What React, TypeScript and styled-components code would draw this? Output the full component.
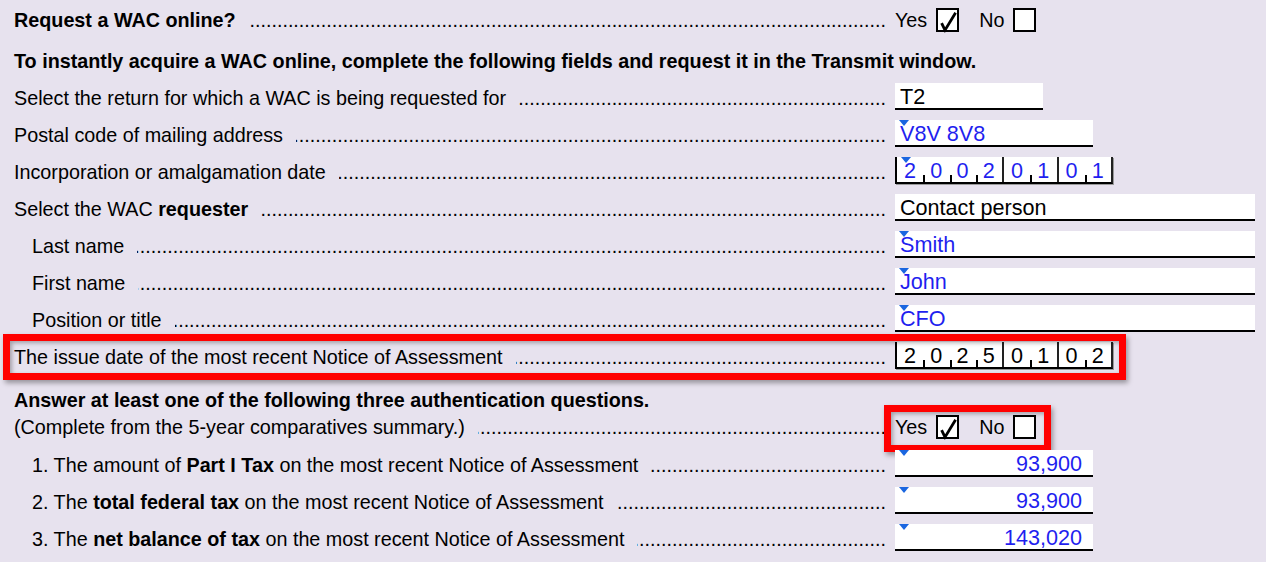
import React from "react";
import styled, { createGlobalStyle, css } from "styled-components";

const BLUE = "#1f1fef";
const MARK = "#1a66e0";

const GlobalStyle = createGlobalStyle`
  *, *::before, *::after { box-sizing: border-box; }
  html, body { margin: 0; padding: 0; }
  body {
    background: #e7e2ee;
    color: #000;
    font-family: "Liberation Sans", Arial, sans-serif;
    font-size: 19.75px;
  }
`;

// red review frame drawn over the highlighted part
const redFrame = (inset: string) => css`
  position: relative;
  &::after {
    content: "";
    position: absolute;
    inset: ${inset};
    border: 7px solid #ff0000;
    box-shadow: 2px 3px 5px rgba(0, 0, 0, 0.35), inset 2px 2px 4px rgba(0, 0, 0, 0.3);
    pointer-events: none;
  }
`;

const Page = styled.div`
  width: 1266px;
  height: 562px;
  overflow: hidden;
  padding: 5px 0 0 14px;
  display: flex;
  flex-direction: column;
`;

const Heading = styled.div<{ $lh?: number; $after?: number }>`
  font-weight: 700;
  white-space: nowrap;
  line-height: ${(p) => p.$lh ?? 27}px;
  margin-bottom: ${(p) => p.$after ?? 0}px;
`;

const Row = styled.div<{ $after?: number; $highlight?: boolean }>`
  display: grid;
  grid-template-columns: 872px max-content;
  grid-template-rows: 27px;
  column-gap: 9px;
  align-items: start;
  width: max-content;
  margin-bottom: ${(p) => p.$after ?? 10}px;
  ${(p) => p.$highlight && redFrame("-8px -13px -11px -11px")}
`;

const Label = styled.div<{ $indent?: boolean; $bold?: boolean }>`
  display: flex;
  align-items: baseline;
  min-width: 0;
  padding-top: 2px;
  padding-left: ${(p) => (p.$indent ? 18 : 0)}px;
  line-height: 27px;
  white-space: nowrap;
  font-weight: ${(p) => (p.$bold ? 700 : 400)};
`;

const Leader = styled.span`
  flex: 1 1 0;
  min-width: 0;
  margin-left: 13px;
  overflow: hidden;
  direction: rtl;
  font-weight: 400;
  &::after {
    content: "........................................................................................................................................................................................";
  }
`;

const Field = styled.div<{ $w: number; $blue?: boolean; $right?: boolean }>`
  position: relative;
  width: ${(p) => p.$w}px;
  height: 27px;
  padding: 2px ${(p) => (p.$right ? 11 : 5)}px 0 5px;
  background: #fff;
  border-bottom: 2px solid #000;
  font-size: 21.6px;
  line-height: 23px;
  white-space: nowrap;
  color: ${(p) => (p.$blue ? BLUE : "#000")};
  text-align: ${(p) => (p.$right ? "right" : "left")};
`;

const Marker = styled.span`
  position: absolute;
  top: 0;
  left: 4px;
  width: 0;
  height: 0;
  border-left: 5px solid transparent;
  border-right: 5px solid transparent;
  border-top: 6px solid ${MARK};
  z-index: 1;
`;

const DateBox = styled.div<{ $blue?: boolean }>`
  position: relative;
  display: flex;
  width: 218px;
  height: 27px;
  border-left: 2px solid #000;
  border-bottom: 2px solid #000;
  border-right: 2px solid #222;
  box-shadow: 1px 1px 0 #9a9a9a;
  font-size: 21.6px;
  color: ${(p) => (p.$blue ? BLUE : "#000")};
`;

const Cell = styled.span<{ $divider: "none" | "tick" | "full" }>`
  flex: 1 1 0;
  padding-top: 2px;
  line-height: 23px;
  text-align: center;
  background: #fff;
  ${(p) =>
    p.$divider === "tick" &&
    css`
      background: linear-gradient(#000, #000) left bottom / 2px 7px no-repeat, #fff;
    `}
  ${(p) =>
    p.$divider === "full" &&
    css`
      border-left: 2px solid #222;
    `}
`;

const Choices = styled.div<{ $highlight?: boolean }>`
  display: flex;
  align-items: center;
  height: 27px;
  padding-top: 3px;
  gap: 20px;
  ${(p) => p.$highlight && redFrame("-7px -15px -13px -11px")}
`;

const Choice = styled.span`
  display: flex;
  align-items: center;
  gap: 9px;
  line-height: 22px;
`;

const Box = styled.span`
  display: inline-block;
  width: 23px;
  height: 24px;
  border: 2px solid #000;
  background: #fff;

  svg {
    display: block;
    overflow: visible;
  }
`;

function CheckBox({ checked }: { checked?: boolean }) {
  return (
    <Box>
      {checked && (
        <svg width="19" height="20" viewBox="0 0 19 20">
          <path d="M3.6 13.2 L7 20.2 L17.6 2.8" fill="none" stroke="#000" strokeWidth="2.8" strokeLinejoin="miter" />
        </svg>
      )}
    </Box>
  );
}

function YesNo({ yes, highlight }: { yes?: boolean; highlight?: boolean }) {
  return (
    <Choices $highlight={highlight}>
      <Choice>
        Yes <CheckBox checked={yes} />
      </Choice>
      <Choice>
        No <CheckBox checked={!yes} />
      </Choice>
    </Choices>
  );
}

function DateField({ value, blue, marker }: { value: string; blue?: boolean; marker?: boolean }) {
  const groupStarts = [4, 6];
  return (
    <DateBox $blue={blue}>
      {marker && <Marker />}
      {value.split("").map((d, i) => (
        <Cell key={i} $divider={i === 0 ? "none" : groupStarts.includes(i) ? "full" : "tick"}>
          {d}
        </Cell>
      ))}
    </DateBox>
  );
}

function Line({
  children,
  indent,
  bold,
}: {
  children: React.ReactNode;
  indent?: boolean;
  bold?: boolean;
}) {
  return (
    <Label $indent={indent} $bold={bold}>
      <span>{children}</span>
      <Leader />
    </Label>
  );
}

export default function App() {
  return (
    <>
      <GlobalStyle />
      <Page>
        <Row $after={16}>
          <Line bold>Request a WAC online?</Line>
          <YesNo yes />
        </Row>

        <Heading $after={8}>
          To instantly acquire a WAC online, complete the following fields and request it in the Transmit window.
        </Heading>

        <Row>
          <Line>Select the return for which a WAC is being requested for</Line>
          <Field $w={148}>T2</Field>
        </Row>
        <Row>
          <Line>Postal code of mailing address</Line>
          <Field $w={198} $blue>
            <Marker />
            V8V 8V8
          </Field>
        </Row>
        <Row>
          <Line>Incorporation or amalgamation date</Line>
          <DateField value="20020101" blue marker />
        </Row>
        <Row>
          <Line>
            Select the WAC <b>requester</b>
          </Line>
          <Field $w={360}>Contact person</Field>
        </Row>
        <Row>
          <Line indent>Last name</Line>
          <Field $w={360} $blue>
            <Marker />
            Smith
          </Field>
        </Row>
        <Row>
          <Line indent>First name</Line>
          <Field $w={360} $blue>
            <Marker />
            John
          </Field>
        </Row>
        <Row>
          <Line indent>Position or title</Line>
          <Field $w={360} $blue>
            <Marker />
            CFO
          </Field>
        </Row>
        <Row $highlight $after={19}>
          <Line>The issue date of the most recent Notice of Assessment</Line>
          <DateField value="20250102" />
        </Row>

        <Heading $lh={24}>Answer at least one of the following three authentication questions.</Heading>

        <Row $after={11}>
          <Line>(Complete from the 5-year comparatives summary.)</Line>
          <YesNo yes highlight />
        </Row>

        <Row>
          <Line indent>
            1. The amount of <b>Part I Tax</b> on the most recent Notice of Assessment
          </Line>
          <Field $w={198} $blue $right>
            <Marker />
            93,900
          </Field>
        </Row>
        <Row>
          <Line indent>
            2. The <b>total federal tax</b> on the most recent Notice of Assessment
          </Line>
          <Field $w={198} $blue $right>
            <Marker />
            93,900
          </Field>
        </Row>
        <Row>
          <Line indent>
            3. The <b>net balance of tax</b> on the most recent Notice of Assessment
          </Line>
          <Field $w={198} $blue $right>
            <Marker />
            143,020
          </Field>
        </Row>
      </Page>
    </>
  );
}
